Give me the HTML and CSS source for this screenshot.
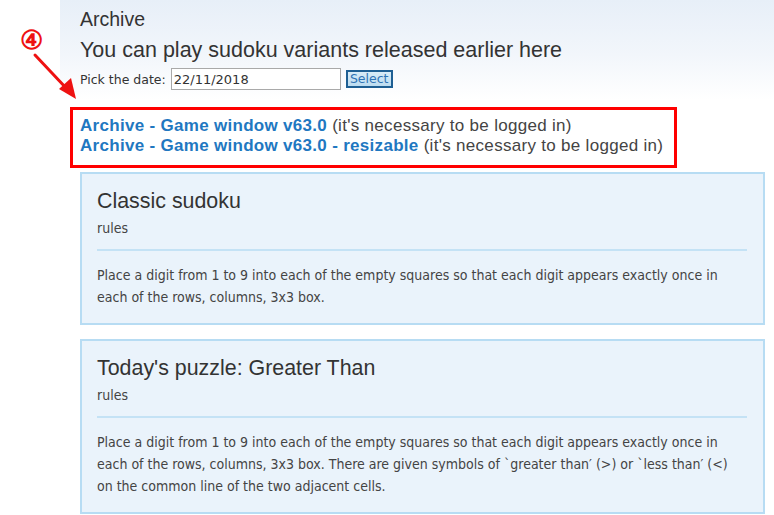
FILE: index.html
```html
<!DOCTYPE html>
<html>
<head>
<meta charset="utf-8">
<link rel="stylesheet" href="styles.css">
</head>
<body>
<div class="page">
  <div class="gutter">
    <div class="marker">④</div>
    <svg class="arrow" width="60" height="70" viewBox="0 0 60 70">
      <line x1="13" y1="17" x2="45" y2="51" stroke="#ee1111" stroke-width="3" stroke-linecap="round"/>
      <polygon points="54,61 37,51 49,40" fill="#ee1111"/>
    </svg>
  </div>
  <main class="main">
    <h1 class="title">Archive</h1>
    <h2 class="subtitle">You can play sudoku variants released earlier here</h2>
    <form class="date-row">
      <label class="date-label">Pick the date:</label>
      <input class="date-input" type="text" value="22/11/2018">
      <button class="select-btn" type="button">Select</button>
    </form>
    <div class="links">
      <div class="link-line"><a class="game-link" href="#">Archive - Game window v63.0</a> (it's necessary to be logged in)</div>
      <div class="link-line"><a class="game-link" href="#">Archive - Game window v63.0 - resizable</a> (it's necessary to be logged in)</div>
    </div>
    <section class="card">
      <h3 class="card-title">Classic sudoku</h3>
      <div class="card-sub">rules</div>
      <hr class="card-rule">
      <p class="card-text">Place a digit from 1 to 9 into each of the empty squares so that each digit appears exactly once in each of the rows, columns, 3x3 box.</p>
    </section>
    <section class="card">
      <h3 class="card-title">Today's puzzle: Greater Than</h3>
      <div class="card-sub">rules</div>
      <hr class="card-rule">
      <p class="card-text">Place a digit from 1 to 9 into each of the empty squares so that each digit appears exactly once in each of the rows, columns, 3x3 box. There are given symbols of `greater than′ (&gt;) or `less than′ (&lt;) on the common line of the two adjacent cells.</p>
    </section>
  </main>
</div>
</body>
</html>
```

FILE: styles.css
```css
html, body {
  margin: 0;
  padding: 0;
  background: #ffffff;
}
body {
  font-family: "Liberation Sans", Arial, sans-serif;
  color: #333333;
}
.page {
  display: flex;
  min-height: 515px;
}
.gutter {
  width: 60px;
  flex: none;
  position: relative;
  background: #ffffff;
}
.marker {
  position: absolute;
  left: 20px;
  top: 27px;
  font-family: "Liberation Serif", "DejaVu Serif", serif;
  font-size: 26px;
  font-weight: bold;
  color: #ee1111;
  line-height: 28px;
}
.arrow {
  position: absolute;
  left: 22px;
  top: 38px;
}
.main {
  flex: 1;
  padding: 8px 9px 0 20px;
  background: linear-gradient(to bottom, #e7eff8 0px, #f2f6fb 55px, #ffffff 100px, #ffffff 100%);
}
.title {
  margin: 0;
  font-size: 19.5px;
  line-height: 22px;
  font-weight: normal;
  color: #333333;
}
.subtitle {
  margin: 8px 0 0;
  font-size: 21.5px;
  line-height: 24px;
  font-weight: normal;
  color: #333333;
}
.date-row {
  margin: 6px 0 0;
  display: flex;
  align-items: center;
  height: 22px;
  font-family: "DejaVu Sans", Verdana, sans-serif;
  font-size: 12.5px;
  color: #333;
}
.date-label {
  margin-right: 5px;
}
.date-input {
  width: 164px;
  height: 18px;
  padding: 1px 2px;
  border: 1px solid #a9a9a9;
  font-family: "DejaVu Sans", Verdana, sans-serif;
  font-size: 13px;
  color: #333;
  background: #fff;
  box-sizing: content-box;
}
.select-btn {
  margin-left: 5px;
  height: 18px;
  width: 47px;
  padding: 0;
  border: 2px solid #1e5f93;
  background: linear-gradient(#d8ecf8, #bcdcf0);
  color: #2f74b5;
  font-family: "DejaVu Sans", Verdana, sans-serif;
  font-size: 12.5px;
  line-height: 14px;
}
.links {
  display: table;
  margin: 17px 0 0 -10px;
  padding: 6px 11px 9px 7px;
  border: 3px solid #ff0000;
  font-size: 17px;
  letter-spacing: 0.3px;
  line-height: 20px;
  color: #444444;
}
.game-link {
  color: #1f78c1;
  font-weight: bold;
  text-decoration: none;
}
.card {
  margin: 4px 0 14px 0;
  padding: 14px 16px 15px 15px;
  background: #eaf3fb;
  border: 2px solid #b7dcf3;
}
.card-title {
  margin: 0;
  font-size: 21.4px;
  line-height: 26px;
  font-weight: normal;
  color: #333333;
}
.card-sub {
  margin-top: 6px;
  font-family: "DejaVu Sans Condensed", "DejaVu Sans", sans-serif;
  font-size: 14px;
  line-height: 16px;
  color: #444;
}
.card-rule {
  margin: 13px 0 13px;
  border: 0;
  height: 2px;
  background: #c4e2f5;
}
.card-text {
  margin: 0;
  font-family: "DejaVu Sans Condensed", "DejaVu Sans", sans-serif;
  font-size: 14px;
  line-height: 22px;
  color: #444;
}
```
